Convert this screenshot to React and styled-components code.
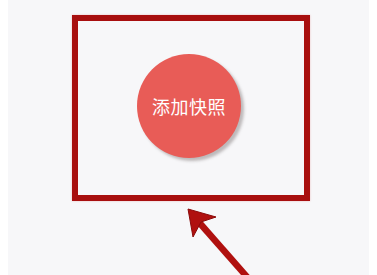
import React from 'react';
import styled, { createGlobalStyle } from 'styled-components';

const GlobalStyle = createGlobalStyle`
    html, body {
        margin: 0;
        padding: 0;
        background: #ffffff;
        overflow: hidden;
    }
    body {
        font-family: "Noto Sans CJK SC", "Noto Sans", sans-serif;
    }
`

const Page = styled.div`
    position: relative;
    width: 377px;
    height: 275px;
    padding: 0 8px;
    box-sizing: border-box;
`

const Panel = styled.div`
    height: 100%;
    background: #f7f7f9;
    padding: 15px 0 0 64px;
    box-sizing: border-box;
`

const Frame = styled.div`
    width: 238px;
    height: 186px;
    box-sizing: border-box;
    border: 6px solid ${props => props.color};
    display: flex;
    align-items: center;
    justify-content: center;
    padding: 0 4px 4px 0;
    box-shadow: 0 0 2px rgba(200, 30, 30, 0.25);
`

const Snapshot = styled.button`
    width: 104px;
    height: 104px;
    border-radius: 50%;
    border: none;
    background: #e85c57;
    color: #ffffff;
    font-family: "Noto Sans CJK SC", sans-serif;
    font-size: 18px;
    letter-spacing: 0.5px;
    padding: 0;
    box-shadow: 3px 3px 3px rgba(120, 110, 110, 0.45);
    cursor: pointer;
`

const Pointer = styled.svg`
    position: absolute;
    left: 0;
    top: 0;
    pointer-events: none;
`

function Arrow() {
    return (
        <Pointer width="377" height="275" viewBox="0 0 377 275">
            <line x1="197" y1="220" x2="255" y2="286" stroke="#b0100f" strokeWidth="6.5" />
            <polygon points="188,209 216,217 201,222 193,237" fill="#b0100f" stroke="#8a0a0a" strokeWidth="1" strokeLinejoin="round" />
        </Pointer>
    );
}

export default function App() {
    return (
        <Page>
            <GlobalStyle />
            <Panel>
                <Frame color="#a80f0f">
                    <Snapshot>添加快照</Snapshot>
                </Frame>
            </Panel>
            <Arrow />
        </Page>
    );
}
